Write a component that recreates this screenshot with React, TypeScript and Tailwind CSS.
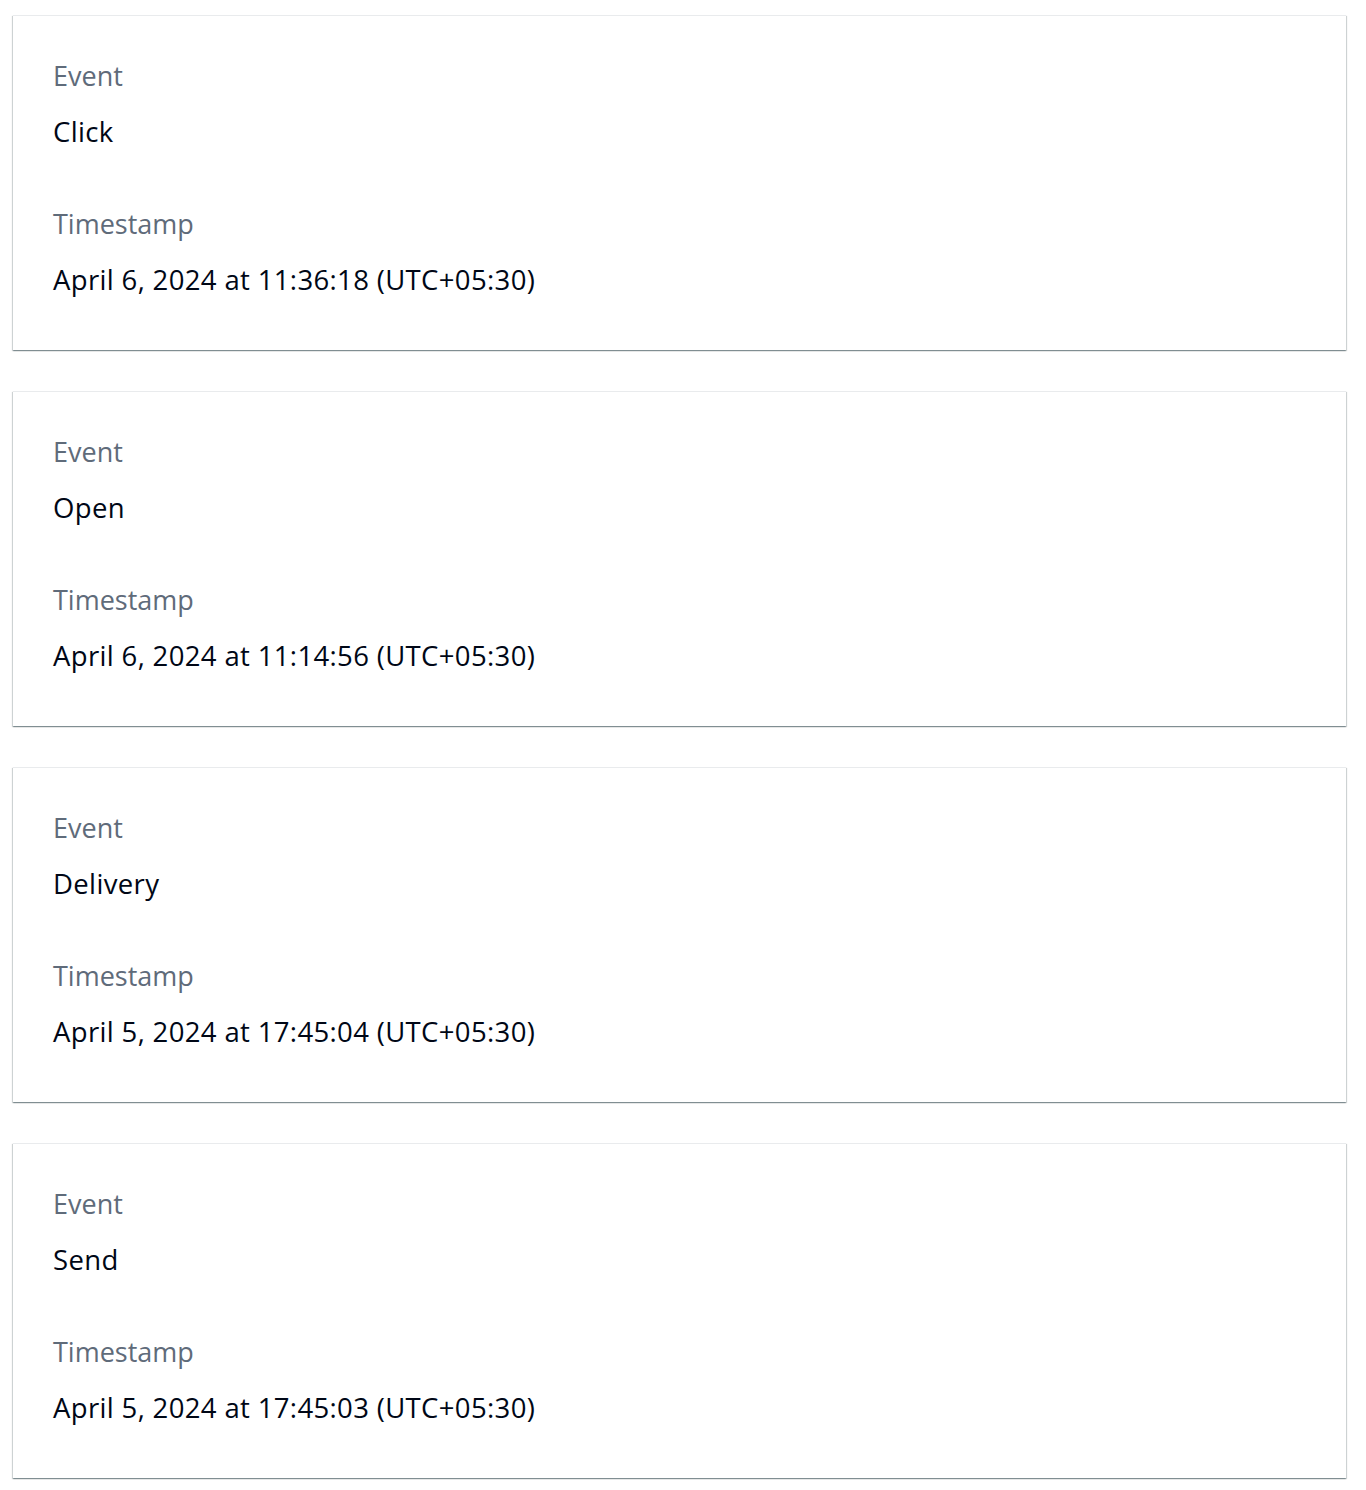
import React from 'react'

interface EventItem {
    event: string
    timestamp: string
}

const events: EventItem[] = [
    { event: 'Click', timestamp: 'April 6, 2024 at 11:36:18 (UTC+05:30)' },
    { event: 'Open', timestamp: 'April 6, 2024 at 11:14:56 (UTC+05:30)' },
    { event: 'Delivery', timestamp: 'April 5, 2024 at 17:45:04 (UTC+05:30)' },
    { event: 'Send', timestamp: 'April 5, 2024 at 17:45:03 (UTC+05:30)' },
]

const Field: React.FC<{ label: string; value: string }> = ({ label, value }) => (
    <div className="flex flex-col gap-4">
        <div className="text-[27px] leading-[40px] text-[#5f6b7a] font-medium">{label}</div>
        <div className="text-[27.5px] leading-[40px] text-[#000716] font-medium tracking-[0.35px]">{value}</div>
    </div>
)

export default function App() {
    return (
        <div className="min-h-screen bg-white pl-[13px] pr-5 pt-[15px] font-['Open_Sans',sans-serif]">
            <div className="flex flex-col gap-[41px]">
                {events.map((e) => (
                    <div
                        key={e.timestamp}
                        className="bg-white h-[335px] px-10 pt-[40px] flex flex-col gap-[52px] border-t border-[#e9ebed] shadow-[0_1px_1px_0_rgba(0,28,36,0.3),1px_1px_1px_0_rgba(0,28,36,0.15),-1px_1px_1px_0_rgba(0,28,36,0.15)]"
                    >
                        <Field label="Event" value={e.event} />
                        <Field label="Timestamp" value={e.timestamp} />
                    </div>
                ))}
            </div>
        </div>
    )
}
